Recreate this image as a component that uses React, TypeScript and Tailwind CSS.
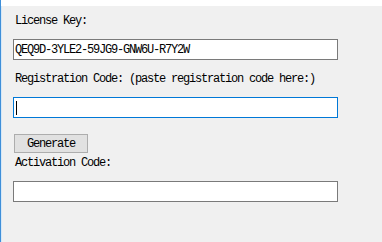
import React from "react";

const mono = { fontFamily: '"Liberation Mono", "DejaVu Sans Mono", monospace' };

function Label({ children, className = "" }: { children: React.ReactNode; className?: string }) {
  return (
    <div className={"h-[12px] text-[12px] leading-[12px] tracking-[-1.2px] text-black whitespace-nowrap " + className}>
      {children}
    </div>
  );
}

export default function App() {
  return (
    <div className="w-[382px] h-[242px] flex flex-col bg-[#f0f0f0] border-l border-l-[#3f8fd9] overflow-hidden" style={mono}>
      <div className="h-[6px] bg-white shrink-0" />
      <div className="flex flex-col border-l border-l-[#d6e8f7] h-full">
        <Label className="mt-[9px] ml-[13px]">License Key:</Label>
        <div className="mt-[12px] ml-[11px] w-[325px] h-[21px] border border-[#7a7a7a] bg-white flex items-center pl-[1px] text-[12px] leading-[12px] tracking-[-1.2px] text-black">
          QEQ9D-3YLE2-59JG9-GNW6U-R7Y2W
        </div>
        <Label className="mt-[13px] ml-[13px]">Registration Code: (paste registration code here:)</Label>
        <div className="mt-[12px] ml-[11px] w-[325px] h-[21px] border border-[#0078d7] bg-white flex items-center pl-[2px]">
          <div className="w-[1px] h-[14px] bg-black" />
        </div>
        <button className="mt-[16px] ml-[12px] w-[74px] h-[19px] border border-[#adadad] bg-[#e1e1e1] text-[12px] leading-[12px] tracking-[-1.2px] text-black flex items-center justify-center">
          Generate
        </button>
        <Label className="mt-[4px] ml-[13px]">Activation Code:</Label>
        <div className="mt-[12px] ml-[11px] w-[325px] h-[21px] border border-[#7a7a7a] bg-white" />
      </div>
    </div>
  );
}
